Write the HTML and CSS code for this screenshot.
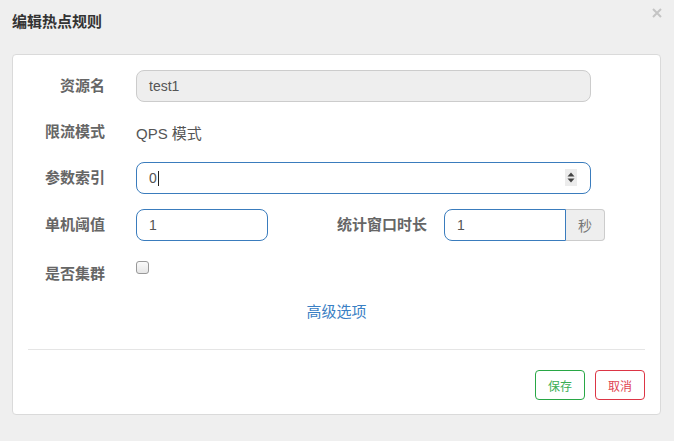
FILE: index.html
```html
<!DOCTYPE html>
<html lang="zh-CN">
<head>
<meta charset="utf-8">
<title>编辑热点规则</title>
<link rel="stylesheet" href="styles.css">
</head>
<body>
<div class="dialog">
  <div class="header">
    <h3 class="title">编辑热点规则</h3>
    <span class="close" aria-label="关闭">
      <svg width="10" height="10" viewBox="0 0 10 10"><path d="M1 1L9 9M9 1L1 9" stroke="#c4c4c4" stroke-width="2" fill="none"/></svg>
    </span>
  </div>
  <div class="card">
    <div class="row">
      <label class="label">资源名</label>
      <div class="field field-wide field-disabled">test1</div>
    </div>
    <div class="row row-static">
      <label class="label">限流模式</label>
      <div class="static">QPS 模式</div>
    </div>
    <div class="row">
      <label class="label">参数索引</label>
      <div class="field field-wide field-focus">0<span class="caret"></span>
        <span class="spinner">
          <svg width="12" height="17" viewBox="0 0 12 17"><rect width="12" height="17" fill="#ececec"/><path d="M6 3.5L9.5 7.5H2.5Z M6 13.5L9.5 9.5H2.5Z" fill="#444"/></svg>
        </span>
      </div>
    </div>
    <div class="row">
      <label class="label">单机阈值</label>
      <div class="field field-small field-focus">1</div>
      <label class="label2">统计窗口时长</label>
      <div class="group">
        <div class="field field-group field-focus">1</div>
        <span class="addon">秒</span>
      </div>
    </div>
    <div class="row row-check">
      <label class="label label-check">是否集群</label>
      <span class="checkbox"></span>
    </div>
    <div class="advanced"><a class="link">高级选项</a></div>
    <hr class="divider">
    <div class="footer">
      <button class="btn btn-save">保存</button>
      <button class="btn btn-cancel">取消</button>
    </div>
  </div>
</div>
</body>
</html>
```
FILE: styles.css
```css
* { box-sizing: border-box; }
body {
  margin: 0;
  background: #efefef;
  font-family: "Liberation Sans", "Noto Sans CJK SC", sans-serif;
  color: #555;
}
.dialog { width: 674px; height: 441px; }
.header {
  display: flex;
  justify-content: space-between;
  align-items: flex-start;
  padding: 12px 12px 22px 12px;
}
.title {
  margin: 0;
  font-size: 15px;
  line-height: 20px;
  font-weight: bold;
  color: #333;
}
.close { margin-top: -4px; display: flex; }
.card {
  margin: 0 13px 0 12px;
  background: #fff;
  border: 1px solid #dadada;
  border-radius: 4px;
  padding: 15px 15px 14px 15px;
}
.row {
  display: flex;
  align-items: center;
  height: 32px;
  margin-bottom: 15px;
}
.row-static { height: 30px; }
.row-check { align-items: flex-start; height: 34px; margin-bottom: 12px; }
.label {
  width: 77px;
  margin-right: 31px;
  text-align: right;
  font-size: 15px;
  line-height: 20px;
  font-weight: bold;
  color: #666;
}
.label-check { padding-top: 8px; }
.label2 {
  margin-left: 69px;
  margin-right: 17px;
  font-size: 15px;
  line-height: 20px;
  font-weight: bold;
  color: #666;
}
.static { font-size: 15px; color: #555; }
.field {
  position: relative;
  height: 32px;
  border: 1px solid #ccc;
  border-radius: 8px;
  padding: 0 12px;
  display: flex;
  align-items: center;
  font-size: 14px;
  color: #555;
  background: #fff;
}
.field-wide { width: 455px; }
.field-small { width: 132px; }
.field-disabled { background: #eee; }
.field-focus { border-color: #3a7cbd; }
.caret {
  display: inline-block;
  width: 1px;
  height: 15px;
  background: #222;
  margin-left: 1px;
}
.spinner {
  position: absolute;
  right: 13px;
  top: 6px;
  display: flex;
}
.group { display: flex; }
.field-group {
  width: 122px;
  border-radius: 8px 0 0 8px;
}
.addon {
  width: 39px;
  height: 32px;
  border: 1px solid #ccc;
  border-left: none;
  border-radius: 0 4px 4px 0;
  background: #eee;
  display: flex;
  align-items: center;
  justify-content: center;
  font-size: 14px;
  color: #777;
}
.checkbox {
  width: 13px;
  height: 13px;
  margin-top: 5px;
  border: 1px solid #999;
  border-radius: 3px;
  background: linear-gradient(#fafafa, #e6e6e6);
}
.advanced {
  text-align: center;
  line-height: 20px;
  height: 20px;
}
.link {
  font-size: 15px;
  color: #3a80c4;
  cursor: pointer;
}
.divider {
  border: none;
  border-top: 1px solid #e5e5e5;
  margin: 27px 0 20px 0;
}
.footer {
  display: flex;
  justify-content: flex-end;
  gap: 10px;
}
.btn {
  width: 50px;
  height: 30px;
  border-radius: 4px;
  background: #fff;
  font-family: inherit;
  font-size: 12px;
  padding: 0;
}
.btn-save { border: 1px solid #28a745; color: #3aae55; }
.btn-cancel { border: 1px solid #dc3545; color: #e04452; }
```
